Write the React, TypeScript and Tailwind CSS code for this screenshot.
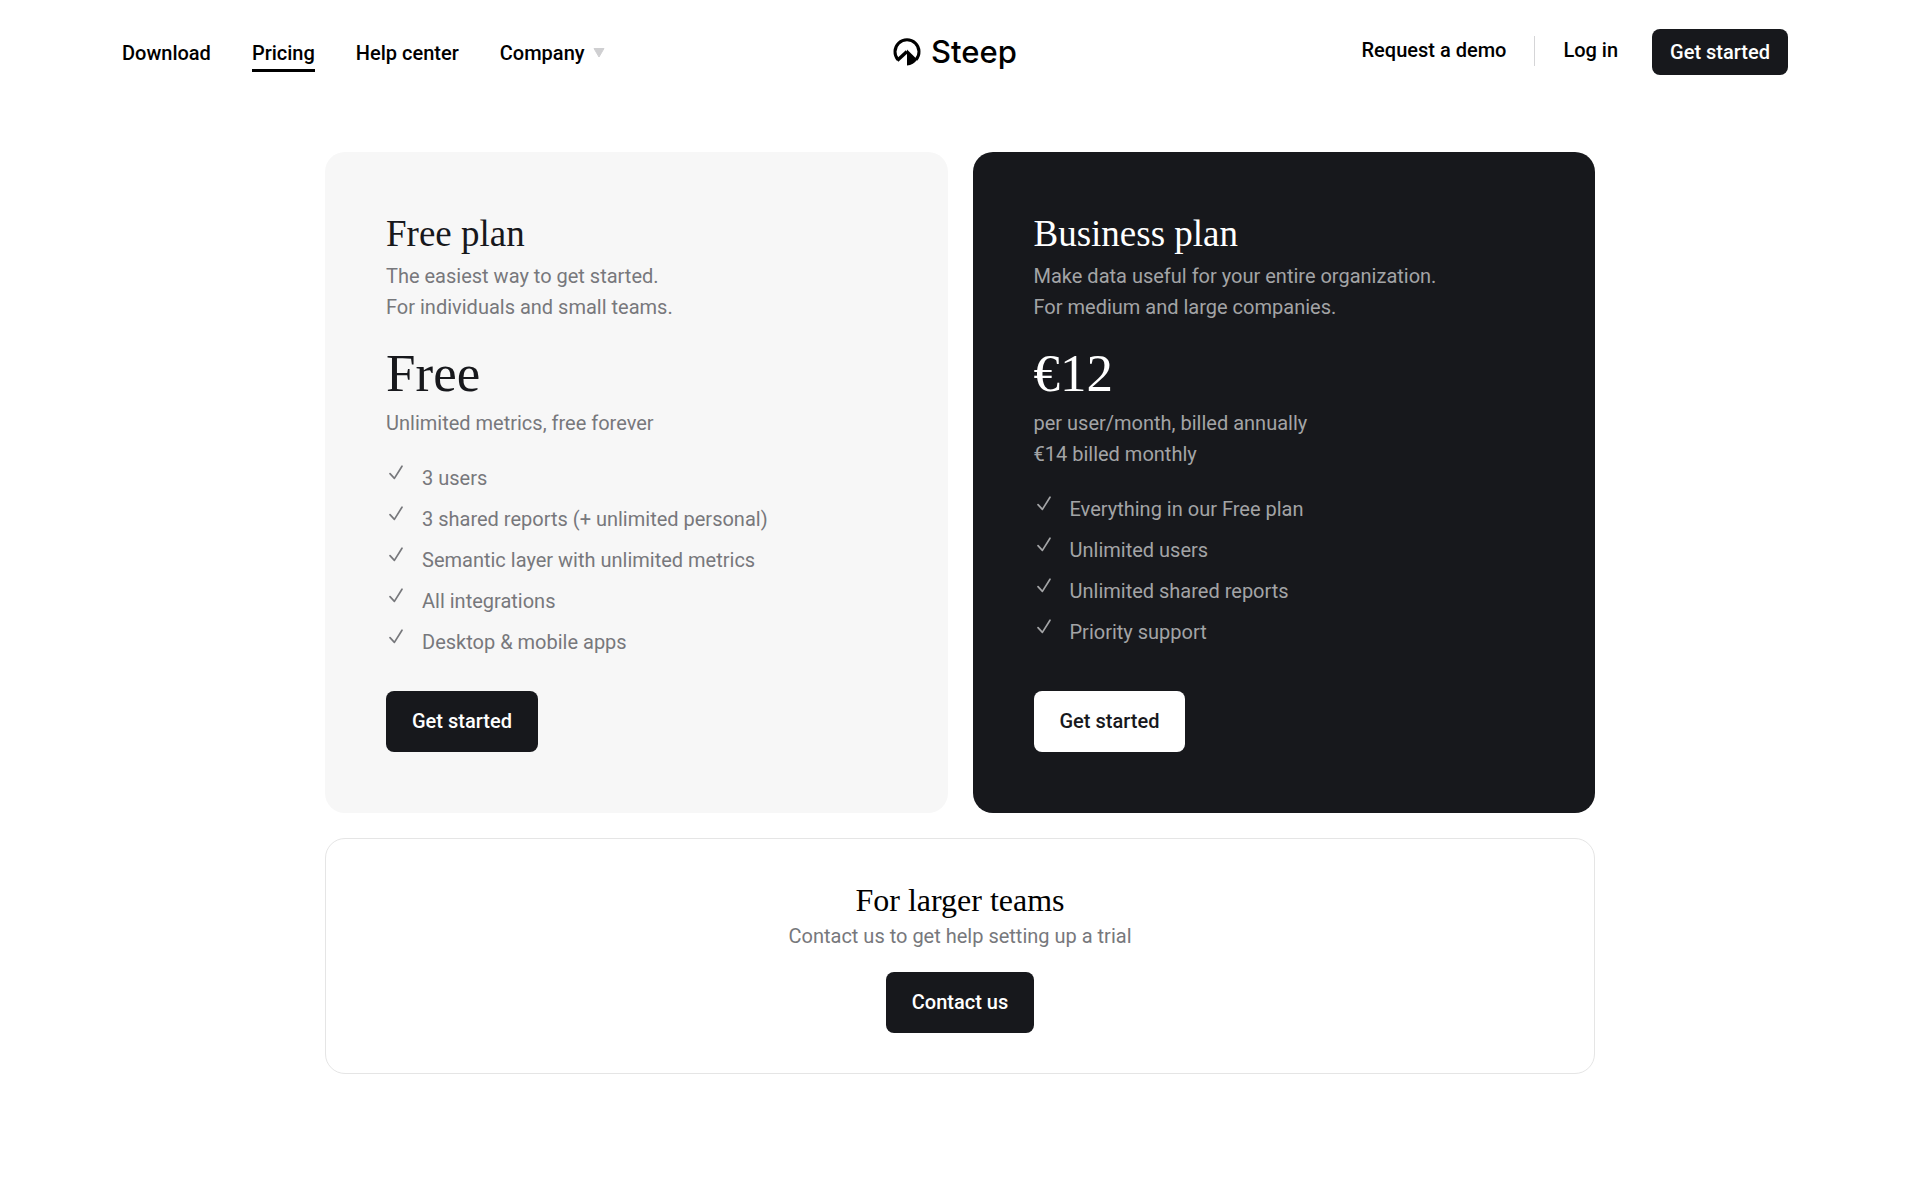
import type { ReactNode } from "react";

const sans = "font-['Roboto','Liberation_Sans',sans-serif]";
const serif = "font-['Liberation_Serif',serif]";

function LogoMark() {
  return (
    <svg viewBox="0 0 28 28" className="size-7" aria-hidden="true">
      <path
        d="M5 21.8A12 12 0 1 1 23 21.8"
        fill="none"
        stroke="#000"
        strokeWidth="3"
      />
      <path d="M4.2 22.6L14 13.4" fill="none" stroke="#000" strokeWidth="3.4" />
      <path d="M14 11.4L24.2 21.4A13.6 13.6 0 0 1 14 27.4Z" fill="#000" />
    </svg>
  );
}

function Check() {
  return (
    <svg
      viewBox="0 0 20 20"
      className="size-5 shrink-0"
      fill="none"
      stroke="currentColor"
      strokeWidth="1.7"
      strokeLinecap="round"
      strokeLinejoin="round"
      aria-hidden="true"
    >
      <path d="M4 10.6L8.4 15.4L16 3.2" />
    </svg>
  );
}

function Features({ items }: { items: string[] }) {
  return (
    <ul className="mt-6 flex flex-col gap-[10px]">
      {items.map((item) => (
        <li key={item} className="flex items-start gap-4">
          <Check />
          <span>{item}</span>
        </li>
      ))}
    </ul>
  );
}

function Button({ light = false, children }: { light?: boolean; children: ReactNode }) {
  return (
    <button
      type="button"
      className={
        light
          ? "h-[61px] rounded-lg bg-white px-[26px] font-medium text-[#17181c]"
          : "h-[61px] rounded-lg bg-[#17181c] px-[26px] font-medium text-white"
      }
    >
      {children}
    </button>
  );
}

export default function App() {
  return (
    <div className={`${sans} min-h-screen bg-white text-[20px] leading-[31px] text-black`}>
      <header className="grid grid-cols-[1fr_auto_1fr] items-center pt-[29px] pr-[132px] pl-[122px] font-medium">
        <nav className="flex items-center gap-[41px]">
          <a href="#download" className="border-b-3 border-transparent pt-[5px]">
            Download
          </a>
          <a href="#pricing" className="border-b-3 border-black pt-[5px]">
            Pricing
          </a>
          <a href="#help" className="border-b-3 border-transparent pt-[5px]">
            Help center
          </a>
          <button
            type="button"
            className="flex items-center gap-2 border-b-3 border-transparent pt-[5px]"
          >
            Company
            <svg viewBox="0 0 12 10" className="h-[10px] w-3" aria-hidden="true">
              <path d="M1 0.5H11L6 9Z" fill="#cfcfd1" stroke="#cfcfd1" strokeLinejoin="round" />
            </svg>
          </button>
        </nav>
        <a href="#home" className="flex items-center gap-[10px]">
          <LogoMark />
          <span className="font-['Inter',sans-serif] text-[31px] leading-[38px] font-medium">Steep</span>
        </a>
        <div className="flex items-center justify-end">
          <div className="flex items-center gap-7 pb-[3px]">
            <a href="#demo">Request a demo</a>
            <span className="h-[30px] w-px bg-[#d5d5d7]" />
            <a href="#login">Log in</a>
          </div>
          <button
            type="button"
            className="ml-[34px] h-[46px] rounded-lg bg-[#17181c] px-[18px] font-medium text-white"
          >
            Get started
          </button>
        </div>
      </header>

      <main className="mx-auto mt-[77px] grid max-w-[1270px] grid-cols-2 gap-[25px]">
        <section className="flex flex-col items-start rounded-[20px] bg-[#f7f7f7] p-[61px] text-[#77787c]">
          <h2 className={`${serif} text-[37px] leading-[42px] text-[#17181c]`}>Free plan</h2>
          <p className="mt-[6px]">
            The easiest way to get started.
            <br />
            For individuals and small teams.
          </p>
          <p className={`${serif} mt-5 text-[53px] leading-[60px] text-[#17181c]`}>Free</p>
          <p className="mt-[5px]">Unlimited metrics, free forever</p>
          <Features
            items={[
              "3 users",
              "3 shared reports (+ unlimited personal)",
              "Semantic layer with unlimited metrics",
              "All integrations",
              "Desktop & mobile apps",
            ]}
          />
          <div className="mt-auto pt-[33px]">
            <Button>Get started</Button>
          </div>
        </section>

        <section className="flex flex-col items-start rounded-[20px] bg-[#17181c] p-[61px] text-[#a3a4a6]">
          <h2 className={`${serif} text-[37px] leading-[42px] text-white`}>Business plan</h2>
          <p className="mt-[6px]">
            Make data useful for your entire organization.
            <br />
            For medium and large companies.
          </p>
          <p className={`${serif} mt-5 text-[53px] leading-[60px] text-white`}>€12</p>
          <p className="mt-[5px]">
            per user/month, billed annually
            <br />
            €14 billed monthly
          </p>
          <Features
            items={[
              "Everything in our Free plan",
              "Unlimited users",
              "Unlimited shared reports",
              "Priority support",
            ]}
          />
          <div className="mt-auto pt-[33px]">
            <Button light>Get started</Button>
          </div>
        </section>

        <section className="col-span-2 flex flex-col items-center rounded-[20px] border border-[#e5e5e5] p-10 text-[#77787c]">
          <h2 className={`${serif} text-[32px] leading-[42px] text-black`}>For larger teams</h2>
          <p>Contact us to get help setting up a trial</p>
          <div className="mt-5">
            <Button>Contact us</Button>
          </div>
        </section>
      </main>
    </div>
  );
}
